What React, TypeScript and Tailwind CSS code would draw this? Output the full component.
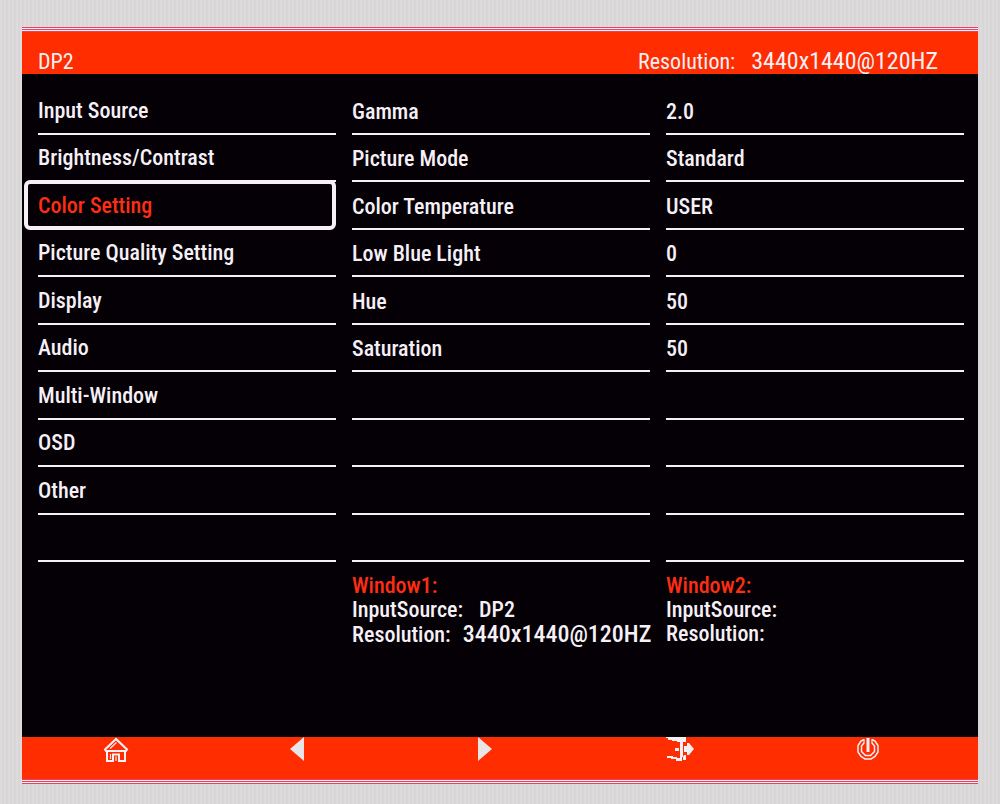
import React, { useState } from 'react';

const ROW_COUNT = 10;

const menuItems = [
  'Input Source',
  'Brightness/Contrast',
  'Color Setting',
  'Picture Quality Setting',
  'Display',
  'Audio',
  'Multi-Window',
  'OSD',
  'Other',
];

const settings = [
  { label: 'Gamma', value: '2.0' },
  { label: 'Picture Mode', value: 'Standard' },
  { label: 'Color Temperature', value: 'USER' },
  { label: 'Low Blue Light', value: '0' },
  { label: 'Hue', value: '50' },
  { label: 'Saturation', value: '50' },
];

const windows = [
  { name: 'Window1:', source: 'DP2', resolution: '3440x1440@120HZ' },
  { name: 'Window2:', source: '', resolution: '' },
];

const HomeIcon = () => (
  <svg width="28" height="26" viewBox="0 0 28 26" fill="none" stroke="currentColor" strokeWidth="2">
    <path d="M14 2 L3 12.5 L4 14 H24 L25 12.5 Z" />
    <path d="M5 14 V24 H11 V17.5 H17 V24 H23 V14" />
    <path d="M8 11.5 L14.5 5.5 M8.5 17 V22" strokeWidth="1.2" />
    <path d="M14 19.5 V24" strokeWidth="1.2" />
  </svg>
);

const LeftIcon = () => (
  <svg width="28" height="24" viewBox="0 0 28 24" fill="#e9e4e6">
    <path d="M14 0 V24 L0 12 Z" />
  </svg>
);

const RightIcon = () => (
  <svg width="28" height="24" viewBox="0 0 28 24" fill="#e9e4e6">
    <path d="M0 0 V24 L14 12 Z" />
  </svg>
);

const ExitIcon = () => (
  <svg width="30" height="25" viewBox="0 0 30 25" fill="currentColor">
    <path d="M1 0 H21 V5 H18 V20 H17 V24 H11 V22 H6 V21 H2 V19 H8 V20 H12 V21 H15 V5 H12 V4 H7 V3 H3 V1 H1 Z" />
    <path d="M10 11 H14 V14 H10 Z" />
    <path d="M19 18 H21 V23 H18 V20 Z" />
    <path d="M19 9 H22 V6 H24 L29 12 L24 18 H22 V15 H19 Z" />
  </svg>
);

const PowerIcon = () => (
  <svg width="24" height="24" viewBox="0 0 24 24" fill="none" stroke="currentColor">
    <path d="M8 2.5 L5 4 L2 8.5 V15 L5 19.5 L9 22 H15 L19 19.5 L22 15 V8.5 L19 4 L16 2.5" strokeWidth="1.5" />
    <path d="M8 6 L5.5 9 V14.5 L9.5 18.5 H14.5 L18.5 14.5 V9 L16 6" strokeWidth="1.5" />
    <path d="M8 2 V6.5 M16 2 V6.5" strokeWidth="1.2" />
    <path d="M12 1 V15" strokeWidth="3" />
  </svg>
);

const controls = [
  { label: 'Home', icon: <HomeIcon /> },
  { label: 'Previous', icon: <LeftIcon /> },
  { label: 'Next', icon: <RightIcon /> },
  { label: 'Exit', icon: <ExitIcon /> },
  { label: 'Power', icon: <PowerIcon /> },
];

const Stripes = () => (
  <div className="flex flex-col gap-px bg-[#fbeff4]">
    <div className="h-px bg-[#e04462]" />
    <div className="h-px bg-[#e04462]" />
    <div className="h-px bg-[#e04462]" />
  </div>
);

export default function App() {
  const [selected, setSelected] = useState('Color Setting');
  const rows = Array.from({ length: ROW_COUNT }, (_, i) => i);

  return (
    <div className="flex min-h-screen flex-col bg-[#dbd8da] bg-[repeating-linear-gradient(90deg,#dedbdd_0px,#dedbdd_2px,#d9d6d8_2px,#d9d6d8_4px)] px-[22px] pt-[27px] pb-5 font-['Roboto_Condensed','Open_Sans_Condensed',sans-serif] text-[22px] leading-6 font-medium text-[#f6f0f6]">
      <Stripes />
      <header className="flex h-[42px] items-end justify-between bg-[#ff2d00] pr-10 pl-4 font-normal">
        <h1>DP2</h1>
        <p className="flex items-baseline gap-4">
          <span>Resolution:</span>
          <span className="text-2xl leading-6">3440x1440@120HZ</span>
        </p>
      </header>

      <main className="flex flex-1 flex-col bg-[#040006] pt-[13px] pr-[14px] pb-[90px] pl-4">
        <div className="grid flex-1 grid-cols-3 gap-x-4">
          <nav className="grid auto-rows-fr">
            {rows.map((i) => {
              const item = menuItems[i];
              if (!item) return <div key={i} className="border-b-2" />;
              const active = item === selected;
              return (
                <button
                  key={item}
                  onClick={() => setSelected(item)}
                  className={`relative flex items-center border-b-2 pt-0.5 text-left ${
                    active ? 'border-transparent text-[#ff2d14]' : 'border-[#f6f0f6]'
                  }`}
                >
                  {item}
                  {active && (
                    <span className="absolute -top-0.5 right-0 -bottom-0.5 -left-[14px] rounded-md border-4 border-[#f6f0f6]" />
                  )}
                </button>
              );
            })}
          </nav>

          <dl className="col-span-2 grid auto-rows-fr grid-cols-2 gap-x-4">
            {rows.map((i) => (
              <React.Fragment key={i}>
                <dt className="flex items-center border-b-2 pt-1">{settings[i]?.label}</dt>
                <dd className="flex items-center border-b-2 pt-1">{settings[i]?.value}</dd>
              </React.Fragment>
            ))}
          </dl>
        </div>

        <div className="mt-3 grid grid-cols-3 gap-x-4 whitespace-nowrap">
          {windows.map((w) => (
            <section key={w.name} className="first:col-start-2">
              <h2 className="text-[#ff2d14]">{w.name}</h2>
              <p className="flex items-baseline gap-4">
                <span>InputSource:</span>
                <span>{w.source}</span>
              </p>
              <p className="flex items-baseline gap-3">
                <span>Resolution:</span>
                <span className="text-2xl leading-6">{w.resolution}</span>
              </p>
            </section>
          ))}
        </div>
      </main>

      <footer className="grid h-[42px] grid-cols-5 items-start bg-[#ff2d00] pr-4">
        {controls.map((c) => (
          <button key={c.label} aria-label={c.label} className="flex justify-center">
            {c.icon}
          </button>
        ))}
      </footer>
      <Stripes />
    </div>
  );
}
